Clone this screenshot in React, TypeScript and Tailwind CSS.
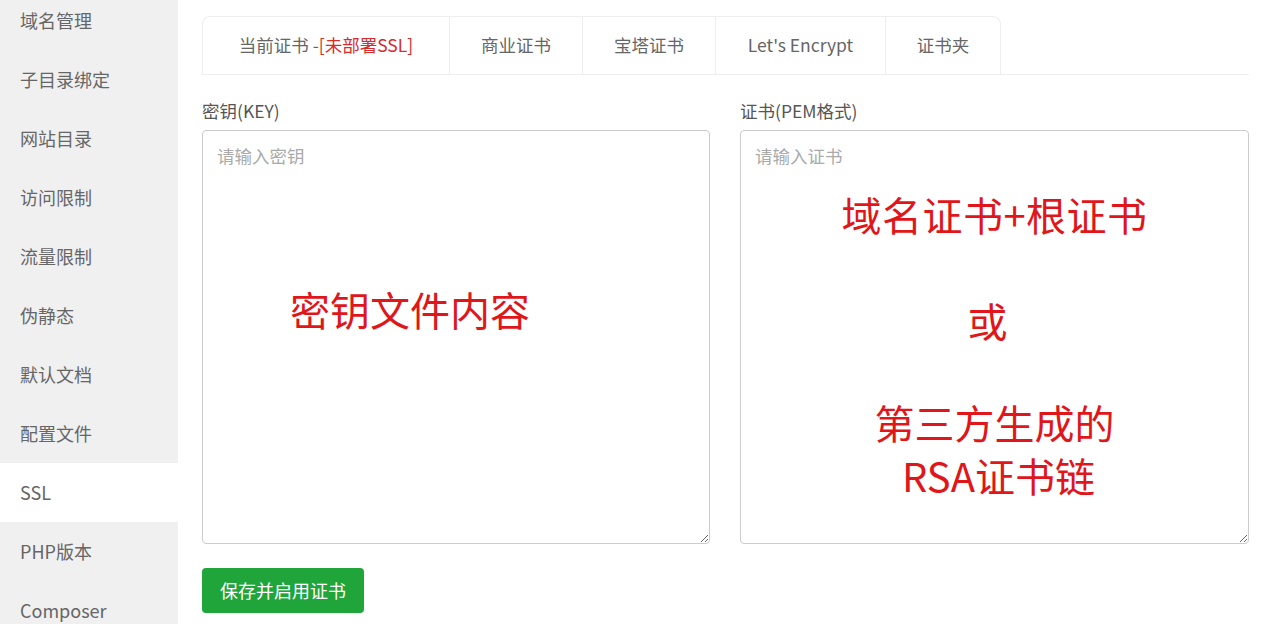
const menu = [
  "域名管理",
  "子目录绑定",
  "网站目录",
  "访问限制",
  "流量限制",
  "伪静态",
  "默认文档",
  "配置文件",
  "SSL",
  "PHP版本",
  "Composer",
];

const tabs = [
  { label: "商业证书", w: "w-[133px]" },
  { label: "宝塔证书", w: "w-[133px]" },
  { label: "Let's Encrypt", w: "w-[170px]" },
  { label: "证书夹", w: "w-[115px]" },
];

const font = { fontFamily: '"Noto Sans CJK SC", "Noto Sans", sans-serif' };

export default function App() {
  return (
    <div className="flex h-[624px] w-[1261px] overflow-hidden bg-white" style={font}>
      {/* Site settings menu */}
      <div className="w-[178px] shrink-0 bg-[#f0f0f0]">
        <div className="-mt-[9px]">
          {menu.map((item) => (
            <div
              key={item}
              className={`flex h-[59px] items-center pl-5 text-[18px] text-[#666] ${
                item === "SSL" ? "bg-white" : ""
              }`}
            >
              {item}
            </div>
          ))}
        </div>
      </div>

      <div className="flex-1 pl-6 pr-3 pt-4">
        {/* Certificate tabs */}
        <div className="flex border-b border-[#eee]">
          <div className="flex h-[58px] w-[248px] items-center justify-center rounded-tl-lg border border-b-0 border-[#eee] bg-white text-[17.5px] text-[#666]">
            当前证书 -<span className="text-[#d82b2b]">[未部署SSL]</span>
          </div>
          {tabs.map((t, i) => (
            <div
              key={t.label}
              className={`flex h-[58px] items-center justify-center border border-b-0 border-l-0 border-[#eee] bg-white text-[17.5px] text-[#666] ${t.w} ${
                i === tabs.length - 1 ? "rounded-tr-lg" : ""
              }`}
            >
              {t.label}
            </div>
          ))}
        </div>

        {/* Key / certificate inputs */}
        <div className="mt-[25px] flex gap-[30px]">
          <div className="w-[508px]">
            <div className="text-[17.5px] leading-[22px] text-[#555]">密钥(KEY)</div>
            <div className="relative mt-[8px]">
              <textarea
                placeholder="请输入密钥"
                className="block h-[414px] w-full resize-y rounded border border-[#ccc] px-[14px] py-[12px] text-[17.5px] text-[#555] placeholder:text-[#aaa] focus:outline-none"
                style={font}
              />
              <div className="pointer-events-none absolute left-[88px] top-[153px] text-[40px] leading-[52px] text-[#e0161a]">
                密钥文件内容
              </div>
            </div>
          </div>
          <div className="w-[509px]">
            <div className="text-[17.5px] leading-[22px] text-[#555]">证书(PEM格式)</div>
            <div className="relative mt-[8px]">
              <textarea
                placeholder="请输入证书"
                className="block h-[414px] w-full resize-y rounded border border-[#ccc] px-[14px] py-[12px] text-[17.5px] text-[#555] placeholder:text-[#aaa] focus:outline-none"
                style={font}
              />
              <div className="pointer-events-none absolute inset-x-0 top-[58px] flex flex-col items-center text-[40px] leading-[52px] text-[#e0161a]">
                <div className="tracking-[0.5px]">域名证书+根证书</div>
                <div className="mt-[54px] -translate-x-[7px]">或</div>
                <div className="mt-[50px]">第三方生成的</div>
                <div className="mt-px translate-x-[4px]">RSA证书链</div>
              </div>
            </div>
          </div>
        </div>

        <button className="mt-6 h-[45px] rounded bg-[#20a53a] px-[18px] text-[18px] text-white">
          保存并启用证书
        </button>
      </div>
    </div>
  );
}
